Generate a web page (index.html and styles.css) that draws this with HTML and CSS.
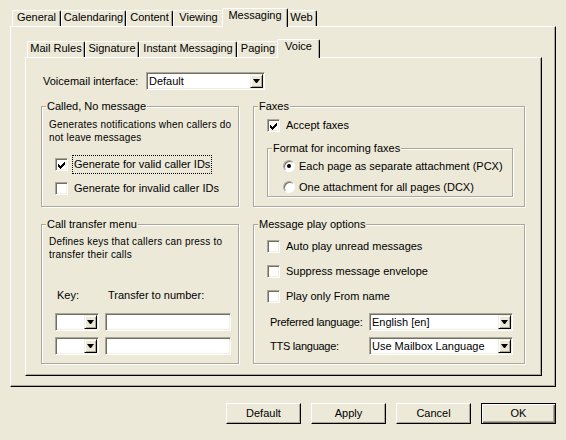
FILE: index.html
```html
<!DOCTYPE html>
<html lang="en">
<head>
    <meta charset="UTF-8">
    <title>Options - Voice</title>
    <link rel="stylesheet" href="styles.css">
</head>
<body>
    <div class="dialog">
        <div class="tabs tabs-main">
            <span class="tab">General</span>
            <span class="tab">Calendaring</span>
            <span class="tab">Content</span>
            <span class="tab">Viewing</span>
            <span class="tab tab-active">Messaging</span>
            <span class="tab">Web</span>
        </div>
        <div class="panel panel-outer">
            <div class="tabs tabs-sub">
                <span class="tab">Mail Rules</span>
                <span class="tab">Signature</span>
                <span class="tab">Instant Messaging</span>
                <span class="tab">Paging</span>
                <span class="tab tab-active">Voice</span>
            </div>
            <div class="panel panel-inner">
                <div class="vm-row">
                    <span class="vm-label">Voicemail interface:</span>
                    <div class="combo vm-combo"><span class="combo-text">Default</span><span class="drop"></span></div>
                </div>

                <div class="groups">
                    <!-- Called, no message -->
                    <div class="group group-called">
                        <span class="group-title">Called, No message</span>
                        <p class="desc">Generates notifications when callers do not leave messages</p>
                        <div class="check-list">
                            <div class="check-row">
                                <span class="check"><svg width="7" height="7" viewBox="0 0 7 7"><path d="M0 2h1v1h1v1h1V3h1V2h1V1h1V0h1v3H6v1H5v1H4v1H3v1H2V6H1V5H0z" fill="#000"/></svg></span>
                                <span class="check-label focused">Generate for valid caller IDs</span>
                            </div>
                            <div class="check-row">
                                <span class="check"></span>
                                <span class="check-label">Generate for invalid caller IDs</span>
                            </div>
                        </div>
                    </div>

                    <!-- Faxes -->
                    <div class="group group-faxes">
                        <span class="group-title">Faxes</span>
                        <div class="check-row">
                            <span class="check"><svg width="7" height="7" viewBox="0 0 7 7"><path d="M0 2h1v1h1v1h1V3h1V2h1V1h1V0h1v3H6v1H5v1H4v1H3v1H2V6H1V5H0z" fill="#000"/></svg></span>
                            <span class="check-label">Accept faxes</span>
                        </div>
                        <div class="group subgroup">
                            <span class="group-title">Format for incoming faxes</span>
                            <div class="radio-row">
                                <span class="radio radio-on"></span>
                                <span class="radio-label">Each page as separate attachment (PCX)</span>
                            </div>
                            <div class="radio-row">
                                <span class="radio"></span>
                                <span class="radio-label">One attachment for all pages (DCX)</span>
                            </div>
                        </div>
                    </div>

                    <!-- Call transfer -->
                    <div class="group group-transfer">
                        <span class="group-title">Call transfer menu</span>
                        <p class="desc">Defines keys that callers can press to transfer their calls</p>
                        <div class="xfer">
                            <div class="xfer-head">
                                <span class="xfer-key">Key:</span>
                                <span class="xfer-num">Transfer to number:</span>
                            </div>
                            <div class="xfer-row">
                                <div class="combo key-combo"><span class="combo-text"></span><span class="drop"></span></div>
                                <div class="field"></div>
                            </div>
                            <div class="xfer-row">
                                <div class="combo key-combo"><span class="combo-text"></span><span class="drop"></span></div>
                                <div class="field"></div>
                            </div>
                        </div>
                    </div>

                    <!-- Message play options -->
                    <div class="group group-play">
                        <span class="group-title">Message play options</span>
                        <div class="check-list">
                            <div class="check-row">
                                <span class="check"></span>
                                <span class="check-label">Auto play unread messages</span>
                            </div>
                            <div class="check-row">
                                <span class="check"></span>
                                <span class="check-label">Suppress message envelope</span>
                            </div>
                            <div class="check-row">
                                <span class="check"></span>
                                <span class="check-label">Play only From name</span>
                            </div>
                        </div>
                        <div class="lang-list">
                            <div class="lang-row">
                                <span class="lang-label">Preferred language:</span>
                                <div class="combo lang-combo"><span class="combo-text">English [en]</span><span class="drop"></span></div>
                            </div>
                            <div class="lang-row">
                                <span class="lang-label">TTS language:</span>
                                <div class="combo lang-combo"><span class="combo-text">Use Mailbox Language</span><span class="drop"></span></div>
                            </div>
                        </div>
                    </div>
                </div>
            </div>
        </div>

        <div class="buttons">
            <button class="btn">Default</button>
            <button class="btn">Apply</button>
            <button class="btn">Cancel</button>
            <button class="btn btn-default">OK</button>
        </div>
    </div>
</body>
</html>
```

FILE: styles.css
```css
* {
    margin: 0;
    padding: 0;
    box-sizing: border-box;
}

html, body {
    background: #ece9d8;
}

body {
    font-family: 'Liberation Sans', Arial, sans-serif;
    font-size: 11px;
    color: #000;
    width: 566px;
    height: 440px;
    overflow: hidden;
}

.dialog {
    padding: 8px 10px 0 10px;
}

/* tab strips */
.tabs {
    display: flex;
    align-items: flex-end;
    height: 18px;
    padding-left: 2px;
}

.tab {
    height: 16px;
    line-height: 13px;
    text-align: center;
    white-space: nowrap;
    border: 1px solid;
    border-bottom: none;
    border-color: #fff #000 transparent #fff;
    border-radius: 2px 2px 0 0;
    box-shadow: inset -1px 0 #aca899;
}

.tab-active {
    position: relative;
    z-index: 1;
    height: 19px;
    margin: 0 -2px -1px -2px;
    background: #ece9d8;
}

/* tab widths follow the original dialog */
.tabs-main .tab:nth-child(1) { width: 49px; }
.tabs-main .tab:nth-child(2) { width: 65px; }
.tabs-main .tab:nth-child(3) { width: 47px; }
.tabs-main .tab:nth-child(4) { width: 51px; }
.tabs-main .tab:nth-child(5) { width: 66px; }
.tabs-main .tab:nth-child(6) { width: 31px; }

.tabs-sub .tab:nth-child(1) { width: 58px; }
.tabs-sub .tab:nth-child(2) { width: 54px; }
.tabs-sub .tab:nth-child(3) { width: 98px; }
.tabs-sub .tab:nth-child(4) { width: 42px; }
.tabs-sub .tab:nth-child(5) { width: 43px; }

/* tab panels */
.panel {
    border: 1px solid;
    border-color: #fff #000 #000 #fff;
    box-shadow: inset -1px -1px #aca899;
}

.panel-outer {
    height: 361px;
    padding: 12px 13px 10px 14px;
}

.panel-inner {
    height: 319px;
    padding: 14px 15px 0 15px;
}

/* voicemail interface */
.vm-row {
    display: flex;
    align-items: center;
    height: 18px;
    margin-left: 2px;
}

.vm-label {
    width: 103px;
}

.vm-combo {
    width: 119px;
}

/* sunken controls */
.combo,
.field {
    height: 18px;
    background: #fff;
    border: 1px solid;
    border-color: #aca899 #fff #fff #aca899;
    box-shadow: inset 1px 1px #716f64, inset -1px -1px #f1efe2;
}

.combo {
    display: flex;
    padding: 1px;
}

.combo-text {
    flex: 1;
    padding-left: 1px;
    line-height: 14px;
    white-space: nowrap;
    overflow: hidden;
}

.drop {
    width: 13px;
    display: flex;
    align-items: center;
    justify-content: center;
    background: #ece9d8;
    border: 1px solid;
    border-color: #f1efe2 #000 #000 #f1efe2;
    box-shadow: inset 1px 1px #fff, inset -1px -1px #aca899;
}

.drop::after {
    content: '';
    width: 1px;
    height: 0;
    border-top: 4px solid #000;
    border-left: 3px solid transparent;
    border-right: 3px solid transparent;
    box-sizing: content-box;
}

/* group boxes */
.groups {
    display: grid;
    grid-template-columns: 198px 272px;
    grid-template-rows: 101px 140px;
    column-gap: 14px;
    row-gap: 17px;
    margin-top: 16px;
}

.group {
    position: relative;
    border: 1px solid #aca899;
    box-shadow: inset 1px 1px #fff, 1px 1px #fff;
}

.group-title {
    position: absolute;
    top: -7px;
    left: 4px;
    padding: 0 1px;
    line-height: 13px;
    background: #ece9d8;
    white-space: nowrap;
}

.desc {
    font-size: 10px;
    line-height: 13px;
    letter-spacing: 0.2px;
}

.group-called {
    padding: 11px 2px 0 7px;
}

.group-called .check-list {
    margin-top: 12px;
    padding-left: 6px;
}

.check-list {
    display: flex;
    flex-direction: column;
    gap: 7px;
}

.check-row {
    display: flex;
    align-items: center;
    height: 17px;
}

.check {
    flex: none;
    width: 13px;
    height: 13px;
    display: flex;
    align-items: center;
    justify-content: center;
    padding-top: 1px;
    background: #fff;
    border: 1px solid;
    border-color: #aca899 #fff #fff #aca899;
    box-shadow: inset 1px 1px #716f64, inset -1px -1px #f1efe2;
}

.check-label {
    margin-left: 5px;
    padding: 2px 1px;
    line-height: 13px;
    white-space: nowrap;
}

.focused {
    outline: 1px dotted #000;
    outline-offset: 0;
}

/* faxes */
.group-faxes {
    padding: 10px 11px 0 13px;
}

.subgroup {
    height: 49px;
    margin-top: 14px;
    padding: 8px 0 0 15px;
}

.radio-row {
    display: flex;
    align-items: center;
    height: 17px;
    margin-bottom: 4px;
}

.radio {
    flex: none;
    width: 12px;
    height: 12px;
    display: flex;
    align-items: center;
    justify-content: center;
    border-radius: 50%;
    background: #fff;
    border: 1px solid;
    border-color: #aca899 #fff #fff #aca899;
    box-shadow: inset 1px 1px #716f64;
}

.radio-on::after {
    content: '';
    width: 4px;
    height: 4px;
    border-radius: 50%;
    background: #000;
}

.radio-label {
    margin-left: 4px;
    white-space: nowrap;
}

/* call transfer */
.group-transfer {
    padding: 10px 2px 0 7px;
}

.xfer {
    margin-top: 28px;
    padding-left: 6px;
}

.xfer-head {
    display: flex;
    line-height: 13px;
    margin-bottom: 11px;
}

.xfer-key {
    width: 50px;
    padding-left: 2px;
}

.xfer-num {
    padding-left: 3px;
}

.xfer-row {
    display: flex;
    gap: 6px;
    margin-bottom: 6px;
}

.key-combo {
    width: 44px;
}

.xfer-row .field {
    width: 126px;
}

/* message play options */
.group-play {
    padding: 13px 11px 0 13px;
}

.check-list + .lang-list {
    margin-top: 8px;
}

.group-play .check-list {
    gap: 8px;
}

.lang-list {
    display: flex;
    flex-direction: column;
    gap: 6px;
    padding-left: 3px;
}

.lang-row {
    display: flex;
    align-items: center;
}

.lang-label {
    flex: none;
    width: 99px;
    white-space: nowrap;
    letter-spacing: -0.25px;
}

.lang-combo {
    width: 149px;
}

/* dialog buttons */
.buttons {
    display: flex;
    justify-content: flex-end;
    gap: 10px;
    margin-top: 16px;
}

.btn {
    width: 75px;
    height: 21px;
    font: inherit;
    color: #000;
    background: #ece9d8;
    border: 1px solid;
    border-color: #fff #000 #000 #fff;
    box-shadow: inset -1px -1px #aca899;
    line-height: 17px;
}

.btn-default {
    border-color: #000;
    box-shadow: inset 1px 1px #fff, inset -1px -1px #716f64, inset -2px -2px #aca899;
}
```
